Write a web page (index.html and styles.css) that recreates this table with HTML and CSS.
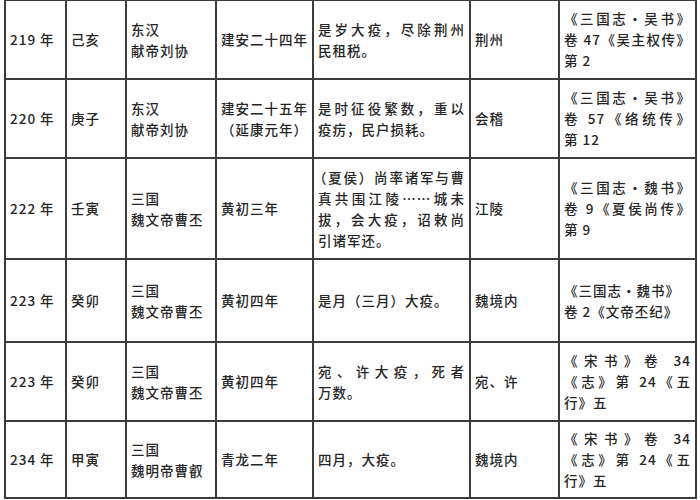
FILE: index.html
```html
<!DOCTYPE html>
<html lang="zh-CN">
<head>
<meta charset="utf-8">
<title>疫情年表</title>
<link rel="stylesheet" href="styles.css">
</head>
<body>
<table class="sheet">
  <colgroup>
    <col class="w1"><col class="w2"><col class="w3"><col class="w4"><col class="w5"><col class="w6"><col class="w7">
  </colgroup>
  <tr class="r1">
    <td class="c1">219 年</td>
    <td class="c2">己亥</td>
    <td class="c3"><span class="ln">东汉</span><span class="ln">献帝刘协</span></td>
    <td class="c4">建安二十四年</td>
    <td class="c5"><span class="ln j">是岁大疫，尽除荆州</span><span class="ln">民租税。</span></td>
    <td class="c6">荆州</td>
    <td class="c7 up"><span class="ln j">《三国志·吴书》</span><span class="ln j">卷 47《吴主权传》</span><span class="ln">第 2</span></td>
  </tr>
  <tr class="r2">
    <td class="c1">220 年</td>
    <td class="c2">庚子</td>
    <td class="c3"><span class="ln">东汉</span><span class="ln">献帝刘协</span></td>
    <td class="c4"><span class="ln">建安二十五年</span><span class="ln">（延康元年）</span></td>
    <td class="c5"><span class="ln j">是时征役繁数，重以</span><span class="ln">疫疠，民户损耗。</span></td>
    <td class="c6">会稽</td>
    <td class="c7 up"><span class="ln j">《三国志·吴书》</span><span class="ln j">卷 57《络统传》</span><span class="ln">第 12</span></td>
  </tr>
  <tr class="r3">
    <td class="c1">222 年</td>
    <td class="c2">壬寅</td>
    <td class="c3"><span class="ln">三国</span><span class="ln">魏文帝曹丕</span></td>
    <td class="c4">黄初三年</td>
    <td class="c5"><span class="ln j pull">（夏侯）尚率诸军与曹</span><span class="ln j">真共围江陵……城未</span><span class="ln j">拔，会大疫，诏敕尚</span><span class="ln">引诸军还。</span></td>
    <td class="c6">江陵</td>
    <td class="c7"><span class="ln j">《三国志·魏书》</span><span class="ln j">卷 9《夏侯尚传》</span><span class="ln">第 9</span></td>
  </tr>
  <tr class="r4">
    <td class="c1">223 年</td>
    <td class="c2">癸卯</td>
    <td class="c3"><span class="ln">三国</span><span class="ln">魏文帝曹丕</span></td>
    <td class="c4">黄初四年</td>
    <td class="c5">是月（三月）大疫。</td>
    <td class="c6">魏境内</td>
    <td class="c7"><span class="ln">《三国志·魏书》</span><span class="ln">卷 2《文帝丕纪》</span></td>
  </tr>
  <tr class="r5">
    <td class="c1">223 年</td>
    <td class="c2">癸卯</td>
    <td class="c3"><span class="ln">三国</span><span class="ln">魏文帝曹丕</span></td>
    <td class="c4">黄初四年</td>
    <td class="c5"><span class="ln j">宛、许大疫，死者</span><span class="ln">万数。</span></td>
    <td class="c6">宛、许</td>
    <td class="c7"><span class="ln j">《宋书》卷 34</span><span class="ln j">《志》第 24《五</span><span class="ln">行》五</span></td>
  </tr>
  <tr class="r6">
    <td class="c1">234 年</td>
    <td class="c2">甲寅</td>
    <td class="c3"><span class="ln">三国</span><span class="ln">魏明帝曹叡</span></td>
    <td class="c4">青龙二年</td>
    <td class="c5">四月，大疫。</td>
    <td class="c6">魏境内</td>
    <td class="c7"><span class="ln j">《宋书》卷 34</span><span class="ln j">《志》第 24《五</span><span class="ln">行》五</span></td>
  </tr>
</table>
</body>
</html>
```
FILE: styles.css
```css
html, body {
  margin: 0;
  padding: 0;
  background: #fefefe;
}

.sheet {
  border-collapse: collapse;
  table-layout: fixed;
  width: 692px;
  margin: -1px 0 0 4px;
  font-family: "Noto Sans CJK SC", sans-serif;
  font-size: 13.5px;
  font-weight: 500;
  line-height: 21px;
  color: #262626;
  letter-spacing: 1px;
}

.w1 { width: 61px; }
.w2 { width: 60px; }
.w3 { width: 90px; }
.w4 { width: 97px; }
.w5 { width: 157px; }
.w6 { width: 89px; }
.w7 { width: 137px; }

.r1 { height: 79px; }
.r2 { height: 79px; }
.r3 { height: 101px; }
.r4 { height: 83px; }
.r5 { height: 79px; }
.r6 { height: 77px; }

.sheet td {
  border: 2px solid #3c3c3c;
  vertical-align: middle;
  padding: 0 4px;
  white-space: nowrap;
}

.ln {
  display: block;
}

.j {
  text-align: justify;
  text-align-last: justify;
}

.pull {
  margin-left: -5px;
}

.c1 { padding-left: 1px; }
.c2 { padding-left: 7px; }
.c3 { padding-left: 3px; }
.c4 { padding-left: 6px; padding-right: 0; }
.c5 { padding-left: 4px; padding-right: 7px; }
.c6 { padding-left: 6px; }
.c7 { padding-left: 0; padding-right: 5px; }
.up { padding-bottom: 8px; }
```
